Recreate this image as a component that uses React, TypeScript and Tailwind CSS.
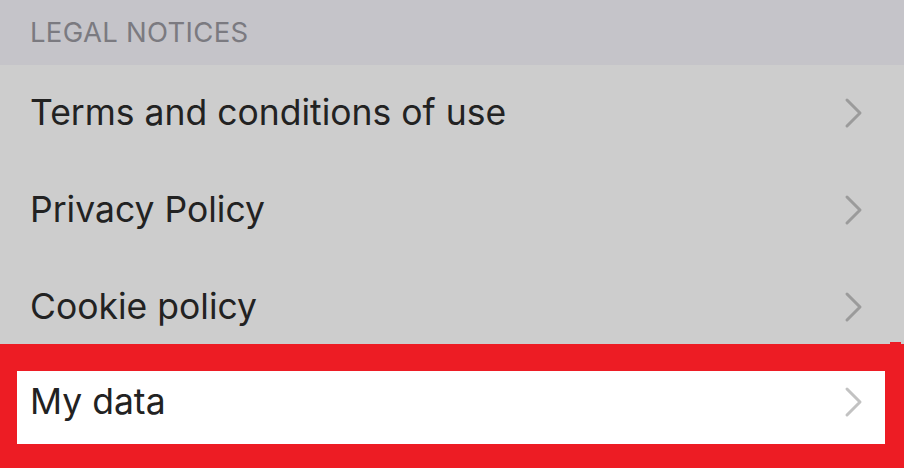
import React from "react";

const Chevron = ({ color = "#9b9b9b" }: { color?: string }) => (
  <svg width="20" height="32" viewBox="0 0 20 32" className="shrink-0">
    <path d="M3 3 L16 16 L3 29" fill="none" stroke={color} strokeWidth="3" strokeLinecap="round" strokeLinejoin="round" />
  </svg>
);

const Row = ({ label, h }: { label: string; h: string }) => (
  <div className={`flex items-center justify-between pl-[30px] pr-[40px] ${h} bg-[#cdcdcd] text-[#222222]`}>
    <span className="text-[35.5px] leading-none">{label}</span>
    <Chevron />
  </div>
);

export default function App() {
  return (
    <div className="w-[904px] h-[468px] overflow-hidden flex flex-col bg-[#cdcdcd]" style={{ fontFamily: "Inter, 'Noto Sans', sans-serif" }}>
      <div className="h-[65px] shrink-0 bg-[#c5c4c9] flex items-center pl-[30px] pt-[1px]">
        <span className="text-[27.5px] leading-none text-[#7b7a80] tracking-[0.3px]">LEGAL NOTICES</span>
      </div>
      <Row label="Terms and conditions of use" h="h-[96px]" />
      <Row label="Privacy Policy" h="h-[97px]" />
      <Row label="Cookie policy" h="h-[86px] pt-[12px]" />
      <div className="flex-1 bg-[#ed1c24] pt-[27px] pb-[24px] pl-[17px] pr-[19px] relative">
        <div className="absolute right-[3px] top-[-2px] w-[11px] h-[2px] bg-[#ed1c24]" />
        <div className="h-full bg-white flex items-center justify-between pl-[13px] pr-[21px] pb-[12px] text-[#222222]">
          <span className="text-[35.5px] leading-none">My data</span>
          <Chevron color="#c2c2c2" />
        </div>
      </div>
    </div>
  );
}
